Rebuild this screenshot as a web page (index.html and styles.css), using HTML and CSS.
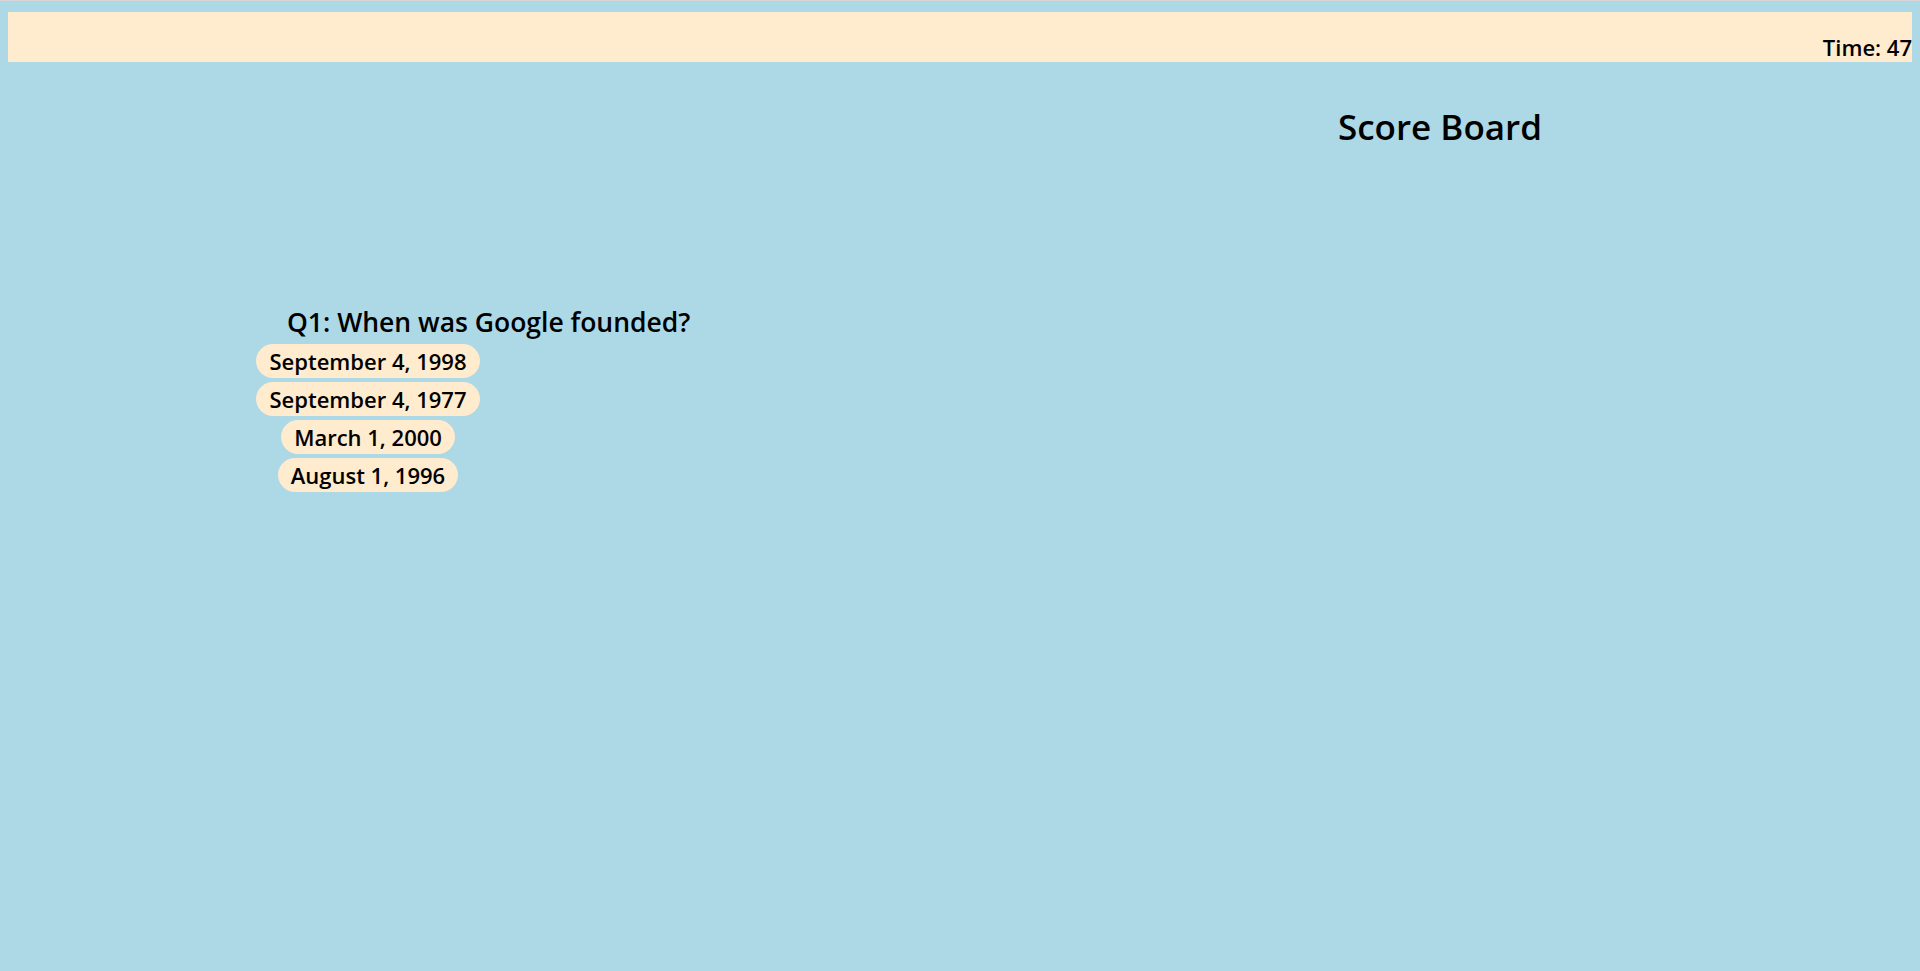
FILE: index.html
```html
<!DOCTYPE html>
<html lang="en">
<head>
<meta charset="utf-8">
<title>Quiz</title>
<link rel="stylesheet" href="styles.css">
</head>
<body>
  <header class="topbar">
    <span class="timer">Time: 47</span>
  </header>
  <main class="main">
    <section class="quiz">
      <h2 class="question">Q1: When was Google founded?</h2>
      <div class="answers">
        <button class="answer">September 4, 1998</button>
        <button class="answer">September 4, 1977</button>
        <button class="answer">March 1, 2000</button>
        <button class="answer">August 1, 1996</button>
      </div>
    </section>
    <section class="scores">
      <h1 class="scores-title">Score Board</h1>
    </section>
  </main>
</body>
</html>
```
FILE: styles.css
```css
html {
  background: #add8e6;
  border-top: 1px solid #d6d6d6;
}
body {
  margin: 8px;
  margin-top: 3px;
  background: #add8e6;
  font-family: "Open Sans", "Liberation Sans", sans-serif;
  font-weight: 600;
  color: #000;
}
.topbar {
  margin-top: 8px;
  height: 50px;
  background: #ffebcd;
  display: flex;
  justify-content: flex-end;
  align-items: flex-end;
}
.timer {
  font-size: 22px;
  line-height: 27px;
  padding-bottom: 1px;
}
.main {
  display: flex;
}
.quiz {
  flex: 0 0 952px;
  padding-top: 243px;
  padding-left: 248px;
  box-sizing: border-box;
}
.question {
  margin: 0 0 5px 31px;
  font-size: 26.5px;
  line-height: 34px;
  font-weight: 600;
  white-space: nowrap;
}
.answers {
  width: 224px;
  display: flex;
  flex-direction: column;
  align-items: center;
  gap: 4px;
}
.answer {
  font-family: "Open Sans", "Liberation Sans", sans-serif;
  font-weight: 600;
  font-size: 22px;
  line-height: 34px;
  height: 34px;
  padding: 0 13px;
  border: none;
  border-radius: 17px;
  background: #ffebcd;
  color: #000;
  white-space: nowrap;
}
.scores {
  flex: 1;
  padding-left: 8px;
  text-align: center;
}
.scores-title {
  margin: 43px 0 0;
  font-size: 35px;
  line-height: 44px;
  font-weight: 600;
}
```
